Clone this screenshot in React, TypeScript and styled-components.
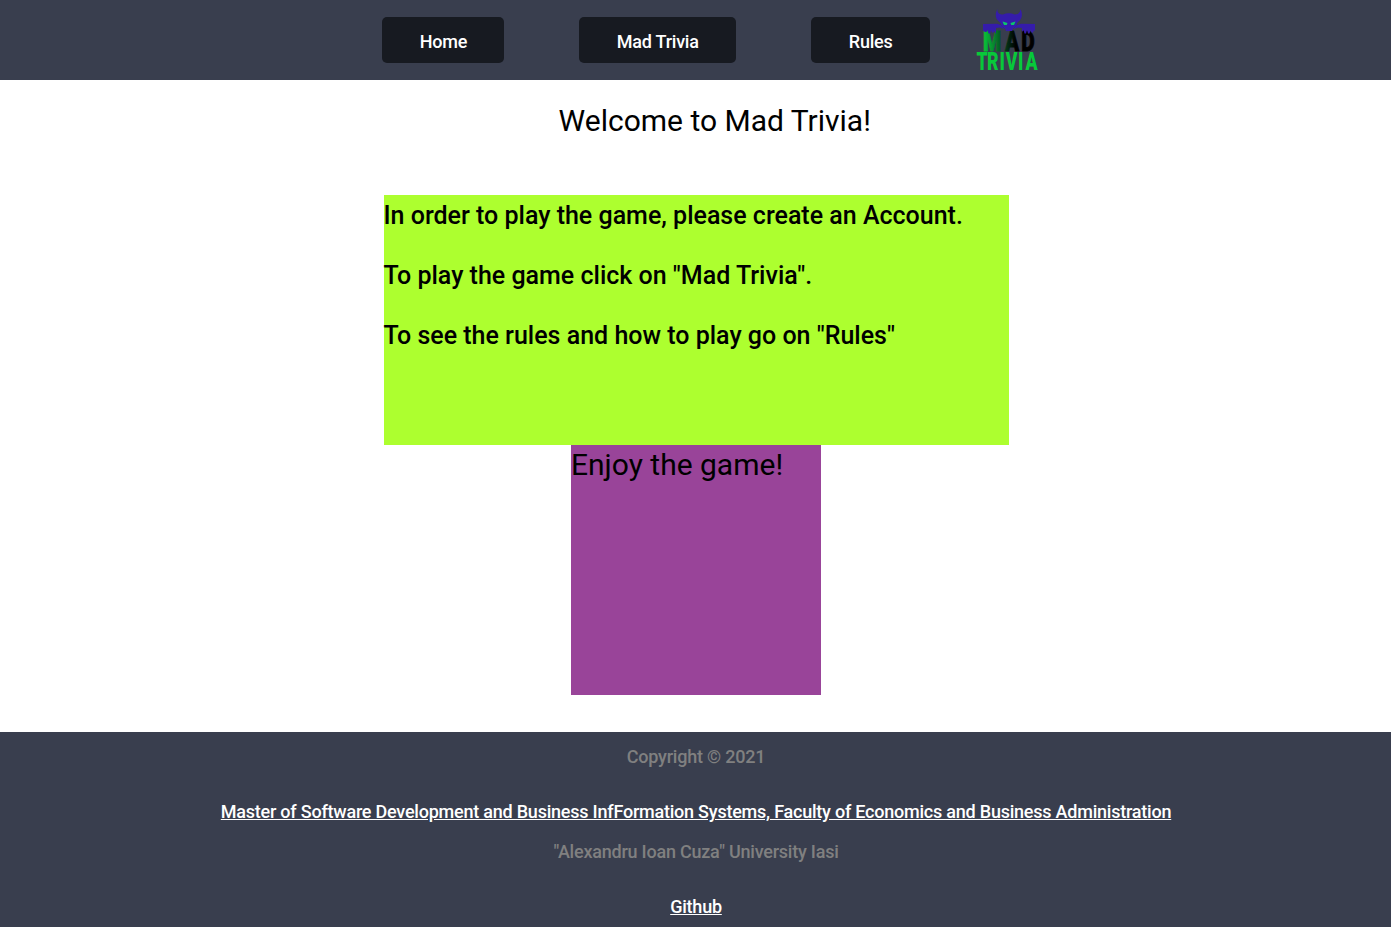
import React from "react";
import styled, { createGlobalStyle } from "styled-components";

const GlobalStyle = createGlobalStyle`
  * { box-sizing: border-box; }
  body {
    margin: 0;
    background: #fff;
    color: #000;
    font-family: Roboto, "Liberation Sans", sans-serif;
  }
`;

const Page = styled.div`
  display: flex;
  flex-direction: column;
  height: 927px;
  overflow: hidden;
`;

const Header = styled.header`
  display: flex;
  align-items: center;
  height: 80px;
  flex: none;
  padding-left: 382px;
  background: #393e4e;
`;

const Nav = styled.nav`
  display: flex;
  gap: 75px;
`;

const NavButton = styled.a<{ $width: number }>`
  width: ${(p) => p.$width}px;
  height: 46px;
  padding: 2px 0 0 37.8px;
  border-radius: 5px;
  background: #171a21;
  color: #fff;
  font-size: 18px;
  font-weight: 500;
  line-height: 46px;
  letter-spacing: -0.225px;
  text-decoration: none;
  white-space: nowrap;
`;

const LogoImage = styled.svg`
  display: block;
  width: 66px;
  height: 66px;
  margin-left: 44px;
  overflow: visible;
`;

const Main = styled.main`
  display: flex;
  flex-direction: column;
  align-items: center;
  height: 652px;
  flex: none;
`;

const Title = styled.h1`
  margin: 21px 0 54px 38.5px;
  font-size: 30px;
  font-weight: 400;
  line-height: 40px;
`;

const Instructions = styled.section`
  width: 625px;
  height: 250px;
  margin-left: 1px;
  padding-top: 1px;
  background: greenyellow;
`;

const Instruction = styled.p`
  margin: 0 0 20px;
  font-size: 25px;
  font-weight: 500;
  line-height: 40px;
`;

const Enjoy = styled.section`
  width: 250px;
  height: 250px;
  margin-left: 1px;
  background: #994499;
  font-size: 30px;
  line-height: 40px;
`;

const Footer = styled.footer`
  display: flex;
  flex-direction: column;
  align-items: center;
  flex: 1;
  padding: 5px 0 0 1px;
  background: #393e4e;
  font-size: 18px;
  font-weight: 500;
  line-height: 40px;
  letter-spacing: -0.225px;
`;

const FooterText = styled.p`
  margin: 0;
  color: gray;
`;

const FooterLink = styled.a`
  margin-top: 15px;
  color: #fff;
  text-decoration: underline;
`;

const Logo = () => (
  <LogoImage viewBox="0 0 66 66" role="img" aria-label="Mad Trivia">
    <defs>
      <linearGradient id="fade" gradientUnits="userSpaceOnUse" x1="12" y1="0" x2="64" y2="0">
        <stop offset="0" stopColor="#08c83a" />
        <stop offset="0.25" stopColor="#07912f" />
        <stop offset="0.55" stopColor="#04401b" />
        <stop offset="0.85" stopColor="#000" />
      </linearGradient>
    </defs>
    <g fontFamily="Roboto, sans-serif" fontWeight="900">
      <text transform="scale(0.74 1)" x="12.2 41.8 63.8" y="44.3" fontSize="28" fill="url(#fade)" stroke="url(#fade)" strokeWidth="0.8">MAD</text>
      <text transform="scale(0.7 1)" x="3.6 18.7 36.6 45.4 63 73.6" y="62.7" fontSize="25.3" fill="#08c83a">TRIVIA</text>
    </g>
    <g fill="#351cab">
      <path d="M23.5 2 C21 6 21 12 25 14.5 L26.5 16 L27.5 19 L31 21.5 L32 24 L38 24 L39 21.5 L42.5 19 L43 16 L44.5 14.5 C48.5 12 48.8 6 46.2 2 C46.5 6 44 7.5 40.5 7.5 C37 5.8 32.5 5.8 29 7.5 C25.5 7.5 23 6 23.5 2 Z" />
      <path d="M9 17 L23 16.7 C26 17.5 29 19 30 22 L26 20.5 L22 21 L22 27 L20.5 24 L19.5 25.5 L18 25.5 L17 23 L16 26.5 L14.5 26.5 L13.5 23 L12.5 25 L11 25 L9 23.5 Z" />
      <path d="M61 17 L47 16.7 C44 17.5 41 19 40 22 L44 20.5 L48 21 L48 25 L49.5 23 L50.5 26.5 L52 26.5 L53 23 L54 26.5 L55.5 26.5 L56.5 23 L57.5 25.5 L59 25.5 L60 23 L61 24 Z" />
    </g>
    <path fill="#0cc76b" d="M28.5 14.5 L33.5 16 L32.8 18 L30 18 Z M41.5 14.5 L36.5 16 L37.2 18 L40 18 Z" />
  </LogoImage>
);

export default function App() {
  return (
    <Page>
      <GlobalStyle />
      <Header>
        <Nav>
          <NavButton $width={122}>Home</NavButton>
          <NavButton $width={157}>Mad Trivia</NavButton>
          <NavButton $width={119}>Rules</NavButton>
        </Nav>
        <Logo />
      </Header>
      <Main>
        <Title>Welcome to Mad Trivia!</Title>
        <Instructions>
          <Instruction>In order to play the game, please create an Account.</Instruction>
          <Instruction>To play the game click on "Mad Trivia".</Instruction>
          <Instruction>To see the rules and how to play go on "Rules"</Instruction>
        </Instructions>
        <Enjoy>Enjoy the game!</Enjoy>
      </Main>
      <Footer>
        <FooterText>Copyright © 2021</FooterText>
        <FooterLink>Master of Software Development and Business InfFormation Systems, Faculty of Economics and Business Administration</FooterLink>
        <FooterText>"Alexandru Ioan Cuza" University Iasi</FooterText>
        <FooterLink>Github</FooterLink>
      </Footer>
    </Page>
  );
}
